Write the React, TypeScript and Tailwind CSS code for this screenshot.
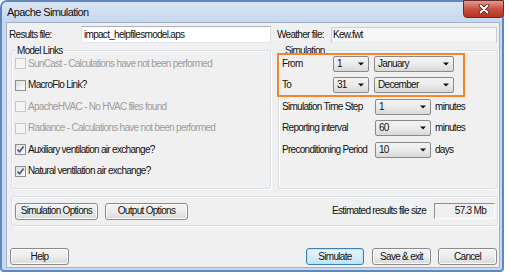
import React from "react";

function Btn({ children, className = "", def = false }: { children: React.ReactNode; className?: string; def?: boolean }) {
  return (
    <div
      className={`h-[17px] flex items-center justify-center whitespace-nowrap rounded-[3px] border text-[10px] text-[#111] ${
        def
          ? "border-[#3c7fb1] bg-linear-to-b from-[#eaf6fd] to-[#c2e3f8] shadow-[inset_0_0_0_1px_#bfe4fb]"
          : "border-[#8a8a8a] bg-linear-to-b from-[#f4f4f4] via-[#ececec] to-[#d9d9d9] shadow-[inset_0_0_0_1px_#fbfbfb]"
      } ${className}`}
    >
      {children}
    </div>
  );
}

function Combo({ value, className = "" }: { value: string; className?: string }) {
  return (
    <div
      className={`h-[16px] flex items-center justify-between rounded-[2px] border border-[#8a8a8a] bg-linear-to-b from-[#f3f3f3] via-[#ebebeb] to-[#d8d8d8] pl-[3px] pr-[4px] text-[10px] text-[#111] ${className}`}
    >
      <span>{value}</span>
      <svg width="6" height="4" viewBox="0 0 6 4">
        <path d="M0 0.5h6L3 3.5z" fill="#111" />
      </svg>
    </div>
  );
}

function Check({ label, checked = false, disabled = false }: { label: string; checked?: boolean; disabled?: boolean }) {
  return (
    <div className="h-[21.5px] flex items-center">
      <span
        className={`w-[11px] h-[11px] border flex items-center justify-center ${
          disabled ? "border-[#c8c8c8] bg-[#f4f4f4]" : "border-[#8e8f8f] bg-linear-to-br from-[#dedede] to-[#fbfbfb]"
        }`}
      >
        {checked && (
          <svg width="9" height="9" viewBox="0 0 9 9">
            <path d="M1.5 4.6 L3.6 6.8 L7.6 1.6" fill="none" stroke="#3d5a98" strokeWidth="1.7" />
          </svg>
        )}
      </span>
      <span className={`ml-[2px] whitespace-nowrap ${disabled ? "text-[#9c9c9c]" : "text-[#111]"}`}>{label}</span>
    </div>
  );
}

export default function App() {
  return (
    <div className="w-[509px] h-[275px] bg-white overflow-hidden font-['Liberation_Sans',Arial,sans-serif] text-[10px] tracking-[-0.7px] leading-none">
      <div className="w-[504px] h-[272px] rounded-t-[7px] rounded-b-[4px] border-2 border-[#5f88c2] bg-[#c8d9ee] flex flex-col">
        {/* title bar */}
        <div className="h-[20px] flex items-start justify-between bg-linear-to-b from-[#dae5f3] to-[#c6d7ed] rounded-t-[5px]">
          <span className="mt-[5px] ml-[5px] text-[11px] tracking-[-0.6px] text-[#111] whitespace-nowrap">Apache Simulation</span>
          <div className="-mt-[2px] -mr-[2px] w-[41px] h-[18px] rounded-b-[4px] border border-[#6b2a2a] bg-linear-to-b from-[#e09a8c] via-[#c9503f] to-[#b8321f] flex items-center justify-center">
            <svg width="12" height="10" viewBox="0 0 12 10">
              <path d="M2.5 1.5 L9.5 8.5 M9.5 1.5 L2.5 8.5" stroke="#3b1f1f" strokeWidth="3.4" strokeLinecap="round" />
              <path d="M2.5 1.5 L9.5 8.5 M9.5 1.5 L2.5 8.5" stroke="#ffffff" strokeWidth="1.9" strokeLinecap="round" />
            </svg>
          </div>
        </div>
        {/* content */}
        <div className="ml-[4px] mr-[2px] h-[246px] border border-[#9fb3cd] bg-[#f0f0f0] flex flex-col">
          {/* results/weather row */}
          <div className="mt-[3px] h-[17px] flex items-center whitespace-nowrap">
            <span className="pl-[2px] w-[74px] text-[#111]">Results file:</span>
            <div className="w-[190px] h-[17px] flex items-center bg-white border border-[#abadb3] border-l-[#e2e3ea] border-r-[#dbdfe6] border-b-[#e3e9ef] pl-[2px] text-[#111]">
              impact_helpfilesmodel.aps
            </div>
            <span className="ml-[6px] w-[54px] text-[#111]">Weather file:</span>
            <div className="w-[166px] h-[16px] flex items-center bg-[#f7f7f7] border border-[#c9ccd2] border-b-[#e3e9ef] pl-[1px] text-[#111]">
              Kew.fwt
            </div>
          </div>

          {/* group boxes */}
          <div className="mt-[7px] pl-[4px] flex">
            <div className="relative w-[260px] h-[139px] rounded-[3px] border border-[#d5dfe5] shadow-[inset_1px_1px_0_#ffffff,1px_1px_0_#ffffff] pt-[2px] pl-[3px]">
              <span className="absolute -top-[7px] left-[4px] px-[1px] bg-[#f0f0f0] text-[#111] leading-[13px] whitespace-nowrap">Model Links</span>
              <Check label="SunCast - Calculations have not been performed" disabled />
              <Check label="MacroFlo Link?" />
              <Check label="ApacheHVAC - No HVAC files found" disabled />
              <Check label="Radiance - Calculations have not been performed" disabled />
              <Check label="Auxiliary ventilation air exchange?" checked />
              <Check label="Natural ventilation air exchange?" checked />
            </div>

            <div className="relative ml-[7px] w-[220px] h-[139px] rounded-[3px] border border-[#d5dfe5] shadow-[inset_1px_1px_0_#ffffff,1px_1px_0_#ffffff] pt-[2px] pl-[3px] whitespace-nowrap">
              <span className="absolute -top-[7px] left-[5px] px-[1px] bg-[#f0f0f0] text-[#111] leading-[13px]">Simulation</span>
              <div className="h-[21.5px] flex items-center">
                <span className="w-[51px] text-[#111]">From</span>
                <Combo value="1" className="w-[36px]" />
                <Combo value="January" className="ml-[5px] w-[80px]" />
              </div>
              <div className="h-[21.5px] flex items-center">
                <span className="w-[51px] text-[#111]">To</span>
                <Combo value="31" className="w-[36px]" />
                <Combo value="December" className="ml-[5px] w-[80px]" />
              </div>
              <div className="h-[21.5px] flex items-center">
                <span className="w-[93px] text-[#111]">Simulation Time Step</span>
                <Combo value="1" className="w-[56px]" />
                <span className="ml-[4px] text-[#111]">minutes</span>
              </div>
              <div className="h-[21.5px] flex items-center">
                <span className="w-[93px] text-[#111]">Reporting interval</span>
                <Combo value="60" className="w-[56px]" />
                <span className="ml-[4px] text-[#111]">minutes</span>
              </div>
              <div className="h-[21.5px] flex items-center">
                <span className="w-[93px] text-[#111]">Preconditioning Period</span>
                <Combo value="10" className="w-[56px]" />
                <span className="ml-[4px] text-[#111]">days</span>
              </div>
              <div className="absolute -left-[2px] top-[2px] w-[188px] h-[44px] border-2 border-[#f5842a]" />
            </div>
          </div>

          {/* options row */}
          <div className="mt-[7px] ml-[4px] w-[487px] h-[30px] rounded-[3px] border border-[#d5dfe5] shadow-[inset_1px_1px_0_#ffffff,1px_1px_0_#ffffff] flex items-center pl-[3px] pr-[2px] whitespace-nowrap">
            <Btn className="w-[83px]">Simulation Options</Btn>
            <Btn className="ml-[7px] w-[83px]">Output Options</Btn>
            <span className="ml-auto text-[#111]">Estimated results file size</span>
            <div className="ml-[8px] w-[61px] h-[16px] flex items-center justify-end pr-[8px] border border-t-[#8f8f8f] border-l-[#8f8f8f] border-b-white border-r-white text-[#111]">
              57.3 Mb
            </div>
          </div>

          {/* bottom buttons */}
          <div className="mt-[22px] h-[17px] flex items-center pl-[3px] pr-[2px]">
            <Btn className="w-[59px]">Help</Btn>
            <Btn def className="ml-auto w-[58px]">Simulate</Btn>
            <Btn className="ml-[8px] w-[59px]">Save &amp; exit</Btn>
            <Btn className="ml-[7px] w-[59px]">Cancel</Btn>
          </div>
        </div>
      </div>
    </div>
  );
}
